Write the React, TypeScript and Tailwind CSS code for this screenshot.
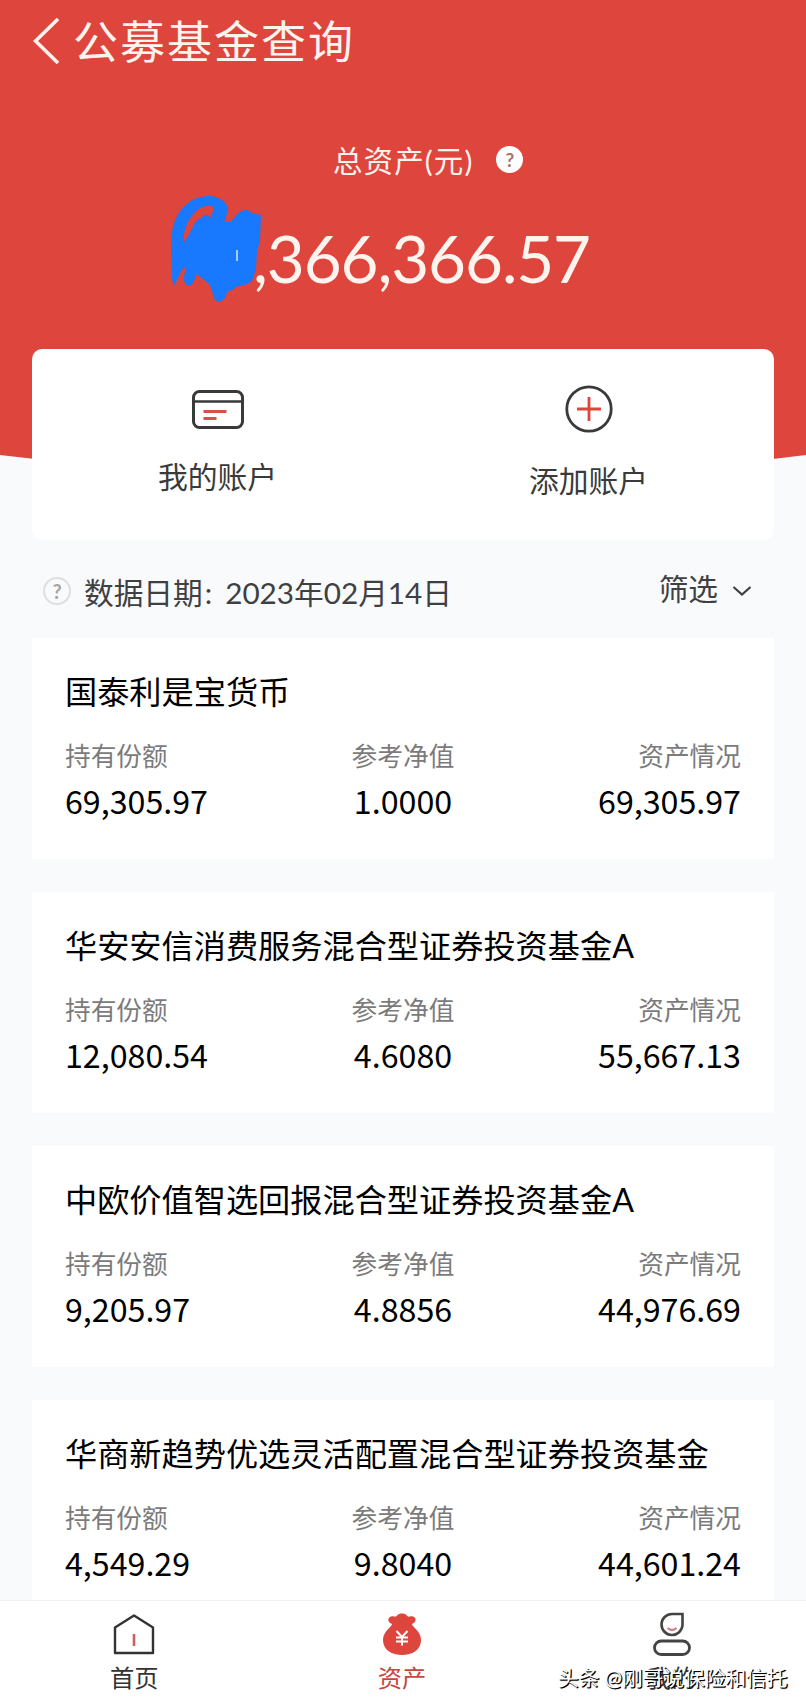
import React from "react";

const funds = [
  { name: "国泰利是宝货币", share: "69,305.97", net: "1.0000", asset: "69,305.97" },
  { name: "华安安信消费服务混合型证券投资基金A", share: "12,080.54", net: "4.6080", asset: "55,667.13" },
  { name: "中欧价值智选回报混合型证券投资基金A", share: "9,205.97", net: "4.8856", asset: "44,976.69" },
  { name: "华商新趋势优选灵活配置混合型证券投资基金", share: "4,549.29", net: "9.8040", asset: "44,601.24" },
];

const Header = () => {
  return (
    <header className="h-[349px] text-[#fff3ee]">
      <div className="flex h-[82px] items-center pl-[33px]">
        <svg width="27" height="46" viewBox="0 0 27 46" fill="none">
          <path d="M25 1 L2.5 23 L25 45" stroke="#fff3ee" strokeWidth="3.6" />
        </svg>
        <h1 className="ml-[13px] pt-[2px] text-[45px] leading-none tracking-[2px]">公募基金查询</h1>
      </div>
      <div className="mt-[58px] flex h-[40px] items-center pl-[333px]">
        <span className="pt-[2px] text-[29.5px] leading-none tracking-[1.1px]">总资产(元)</span>
        <span className="ml-[23px] flex h-[27px] w-[27px] -translate-y-px items-center justify-center rounded-full bg-white text-[19px] leading-none font-bold text-[#a8716c]">
          ?
        </span>
      </div>
      <div className="relative mt-[40px] flex h-[80px] items-center pl-[253px]">
        <span className="-mt-[5px] text-[65.5px] leading-none tracking-[-1.1px]">,366,366.57</span>
        <svg className="absolute top-[-28px] left-[170px]" width="94" height="114" viewBox="0 0 94 114">
          <path
            d="M2 87 L1 49 C2 27 13 5 38 4 C50 4 58 10 58 19 L54 30 L61 30 C66 23 70 18 76 18 C80 18 82 22 86 22 L91 23 L90 49 L87 59 L86 77 L82 89 L75 93 L68 94 L62 98 L57 100 C55 112 44 113 43 102 L40 93 L27 82 L23 91 C19 97 13 92 14 85 L16 74 L12 78 L4 94 Z"
            fill="#1878fe"
          />
          <path
            d="M13 51 C14 34 22 17 36 14 C42 13 44 14 43 18 L41 26 C38 22 34 22 31 26 L26 29 C22 36 18 46 13 51 Z"
            fill="#dd453d"
          />
          <path d="M67 58 V69" stroke="#cfe6ff" strokeWidth="1.5" />
        </svg>
      </div>
    </header>
  );
};

const Actions = () => {
  return (
    <section className="mx-8 flex h-[191px] rounded-[10px] bg-white text-[29.8px] leading-none text-[#3a3a3a]">
      <div className="flex w-1/2 flex-col items-center pt-[41px]">
        <svg width="52" height="39" viewBox="0 0 52 39" fill="none">
          <rect x="1.5" y="1.5" width="49" height="36" rx="6" stroke="#3a3a3a" strokeWidth="3" />
          <path d="M2 11.5 H50" stroke="#3a3a3a" strokeWidth="2.6" />
          <path d="M11.5 21.5 H34.5 M11.5 28.5 H24.5" stroke="#d5514b" strokeWidth="2.8" />
        </svg>
        <span className="mt-[33px]">我的账户</span>
      </div>
      <div className="flex w-1/2 flex-col items-center pt-[36px]">
        <svg width="48" height="48" viewBox="0 0 48 48" fill="none">
          <circle cx="24" cy="24" r="22.2" stroke="#3a3a3a" strokeWidth="2.8" />
          <path d="M24 12 V36 M12 24 H36" stroke="#dd453d" strokeWidth="2.8" />
        </svg>
        <span className="mt-[33px]">添加账户</span>
      </div>
    </section>
  );
};

const FilterRow = () => {
  return (
    <div className="flex h-[98px] items-center pt-[4px] pr-[54px] pl-[43px] text-[29.7px] leading-none text-[#3f4042]">
      <span className="flex h-[28px] w-[28px] items-center justify-center rounded-full border-2 border-[#dedfe0] text-[20px] leading-none font-bold text-[#a4a5a7]">
        ?
      </span>
      <span className="ml-[13px] pt-[4px]">
        数据日期<span className="mr-[13px] ml-[2px]">:</span>2023年02月14日
      </span>
      <span className="ml-auto -mt-[4px]">筛选</span>
      <svg className="ml-[14px]" width="20" height="12" viewBox="0 0 20 12" fill="none">
        <path d="M1.5 2 L10 9.5 L18.5 2" stroke="#3f4042" strokeWidth="2.2" />
      </svg>
    </div>
  );
};

const FundCard = ({ fund }: { fund: (typeof funds)[number] }) => {
  return (
    <div className="h-[221px] shrink-0 bg-white px-[33px] pt-[37px] text-black">
      <h2 className="text-[32.2px] leading-[34px]">{fund.name}</h2>
      <div className="mt-[33px] grid grid-cols-3 text-[25.7px] leading-[28px] text-[#7b7b7b]">
        <span>持有份额</span>
        <span className="text-center">参考净值</span>
        <span className="text-right">资产情况</span>
      </div>
      <div className="mt-[12px] grid grid-cols-3 font-['Noto_Sans_CJK_SC',sans-serif] text-[32.2px] leading-[36px]">
        <span>{fund.share}</span>
        <span className="text-center">{fund.net}</span>
        <span className="text-right">{fund.asset}</span>
      </div>
    </div>
  );
};

const TabBar = () => {
  return (
    <nav className="relative flex h-[106px] border-t border-[#f1f2f5] bg-white text-[24.3px] leading-none text-[#333]">
      <div className="flex w-1/3 flex-col items-center pt-[12px]">
        <svg width="42" height="42" viewBox="0 0 42 42" fill="none">
          <path d="M2 40 V14.5 L21 2.5 L40 14.5 V40 Z" stroke="#333" strokeWidth="2.4" strokeLinejoin="round" />
          <path d="M21 21 V33" stroke="#d0605a" strokeWidth="2.6" />
        </svg>
        <span className="mt-[11px]">首页</span>
      </div>
      <div className="flex w-1/3 flex-col items-center pt-[12px] pr-[2px] text-[#c9463f]">
        <svg width="40" height="42" viewBox="0 0 40 42" fill="none">
          <path
            d="M10 11 C4 9 6 2 12 3.5 C14 4 15 3 16 1.5 C18 0 22 0 24 1.5 C25 3 26 4 28 3.5 C34 2 36 9 30 11 C30 14 39 18 39 27 C39 37 30 42 20 42 C10 42 1 37 1 27 C1 18 10 14 10 11 Z"
            fill="#dd453d"
          />
          <path d="M14.5 18 L20 24 L25.5 18 M20 24 V32.5 M14 24.5 H26 M14 28.5 H26" stroke="#fff" strokeWidth="2" />
        </svg>
        <span className="mt-[11px]">资产</span>
      </div>
      <div className="flex w-1/3 flex-col items-center pt-[11px]">
        <svg width="38" height="44" viewBox="0 0 38 44" fill="none">
          <path d="M19 2 H29.5 V13 A10.5 10.5 0 1 1 19 2 Z" stroke="#444" strokeWidth="2.6" />
          <path d="M14.5 16 Q19 20 23.5 16" stroke="#c98287" strokeWidth="2.2" />
          <rect x="1.5" y="29" width="35" height="13.5" rx="6.75" stroke="#444" strokeWidth="2.8" />
        </svg>
        <span className="mt-[10px]">我的</span>
      </div>
      <span className="absolute top-[65px] left-[558px] text-[20.7px] leading-[24px] whitespace-nowrap text-white [text-shadow:1px_1px_0_#000,1px_1px_1px_#000]">
        头条 @刚哥说保险和信托
      </span>
    </nav>
  );
};

const App = () => {
  return (
    <div className="h-[1706px] w-[806px] overflow-hidden bg-[#f8fafc] font-[Lato,'Noto_Sans_CJK_SC',sans-serif]">
      <main className="relative isolate h-[1600px] overflow-hidden">
        <svg className="absolute top-0 left-0 -z-10" width="806" height="500" viewBox="0 0 806 500">
          <path d="M0 0 H806 V455 Q403 505 0 455 Z" fill="#dd453d" />
        </svg>
        <Header />
        <Actions />
        <FilterRow />
        <section className="mx-8 flex flex-col gap-[33px]">
          {funds.map((fund) => (
            <FundCard key={fund.name} fund={fund} />
          ))}
        </section>
      </main>
      <TabBar />
    </div>
  );
};

export default App;
